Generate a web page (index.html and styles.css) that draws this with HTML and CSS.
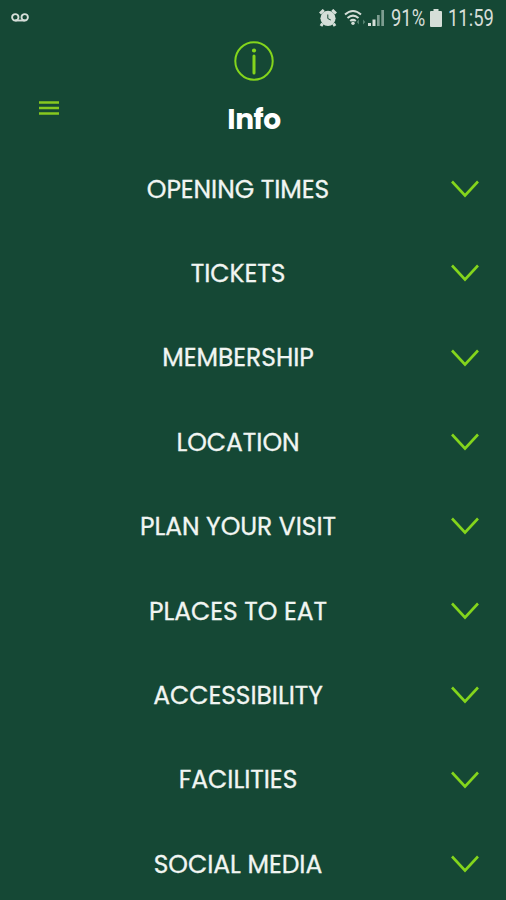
FILE: index.html
```html
<!DOCTYPE html>
<html lang="en">
<head>
<meta charset="utf-8">
<title>Info</title>
<link rel="stylesheet" href="styles.css">
</head>
<body>
<svg class="defs" width="0" height="0" aria-hidden="true">
  <symbol id="chevron" viewBox="0 0 30 20"><path d="M2 2.5 15 16.5 28 2.5" fill="none" stroke="currentColor" stroke-width="2.6"/></symbol>
</svg>
<div class="status">
  <svg class="voicemail" width="18" height="10" viewBox="0 0 18 10"><g fill="none" stroke="currentColor" stroke-width="1.9"><circle cx="4.3" cy="4.3" r="3.2"/><circle cx="13.7" cy="4.3" r="3.2"/><path d="M4.3 7.5h9.4"/></g></svg>
  <svg class="alarm" width="18" height="18" viewBox="0 0 18 18"><circle cx="9" cy="9.3" r="7.6" fill="currentColor"/><path d="M1 4.5 4.8 1M17 4.5 13.2 1M3.5 14.5 2 17M14.5 14.5 16 17" stroke="currentColor" stroke-width="3"/><path d="M8.8 5.5v4l3 1.5" fill="none" stroke="#154835" stroke-width="1"/></svg>
  <svg class="wifi" width="22" height="18" viewBox="0 0 22 18"><g fill="none" stroke="currentColor" stroke-width="2"><path d="M1 5.500Q9 -1.500 17 5.500"/><path d="M3.5 9Q9 4.200 14.500 9"/><path d="M6.200 12Q9 9.700 11.800 12"/></g><circle cx="9" cy="14.300" r="1.700" fill="currentColor"/><path d="M15 10.500v5l-2.400-2.600M19 15.500v-5l2.400 2.600" fill="#568371"/></svg>
  <svg class="signal" width="17" height="18" viewBox="0 0 17 18"><path d="M0 14h3v3H0zM4.500 10.500h3V17h-3z" fill="currentColor"/><path d="M9 6h2.700v11H9zM13.300 1H16v16h-2.700z" fill="#7d9d90"/></svg>
  <span class="percent"><span class="narrow">91%</span></span>
  <svg class="battery" width="12" height="18" viewBox="0 0 12 18"><path d="M3.500 0h5v2H11q1 0 1 1v14q0 1-1 1H1q-1 0-1-1V3q0-1 1-1h2.500z" fill="currentColor"/></svg>
  <span class="clock"><span class="narrow">11:59</span></span>
</div>
<header class="header">
  <button class="menu" aria-label="Menu"><svg width="20" height="15" viewBox="0 0 20 15"><path d="M0 2.500h20M0 8h20M0 13.500h20" stroke="currentColor" stroke-width="2.600"/></svg></button>
  <div class="title">
    <svg width="40" height="40" viewBox="0 0 40 40"><circle cx="20" cy="20" r="18.700" fill="none" stroke="currentColor" stroke-width="2"/><circle cx="20" cy="9.500" r="2.100" fill="currentColor"/><path d="M20 15v17" stroke="currentColor" stroke-width="3" stroke-linecap="round"/></svg>
    <h1>Info</h1>
  </div>
</header>
<main class="list">
  <div class="row"><span class="label">OPENING TIMES</span><svg class="chevron"><use href="#chevron"/></svg></div>
  <div class="row"><span class="label">TICKETS</span><svg class="chevron"><use href="#chevron"/></svg></div>
  <div class="row"><span class="label">MEMBERSHIP</span><svg class="chevron"><use href="#chevron"/></svg></div>
  <div class="row"><span class="label">LOCATION</span><svg class="chevron"><use href="#chevron"/></svg></div>
  <div class="row"><span class="label">PLAN YOUR VISIT</span><svg class="chevron"><use href="#chevron"/></svg></div>
  <div class="row"><span class="label">PLACES TO EAT</span><svg class="chevron"><use href="#chevron"/></svg></div>
  <div class="row"><span class="label">ACCESSIBILITY</span><svg class="chevron"><use href="#chevron"/></svg></div>
  <div class="row"><span class="label">FACILITIES</span><svg class="chevron"><use href="#chevron"/></svg></div>
  <div class="row"><span class="label">SOCIAL MEDIA</span><svg class="chevron"><use href="#chevron"/></svg></div>
</main>
</body>
</html>
```
FILE: styles.css
```css
* { box-sizing: border-box; }
body { margin: 0; height: 900px; overflow: hidden; background: #154835; color: #f1f5f2; font-family: Poppins, Inter, sans-serif; }
.defs { position: absolute; }
.status { display: flex; align-items: center; height: 36px; padding: 0 12px 0 11px; color: #d5ded8; font-family: Roboto, sans-serif; font-size: 23px; line-height: 38px; }
.alarm { margin-left: auto; margin-right: 7px; }
.wifi { margin-right: 2px; }
.signal { margin-right: 6px; }
.percent { width: 34px; margin-right: 5px; white-space: nowrap; }
.battery { margin-right: 6px; }
.clock { width: 46px; white-space: nowrap; }
.narrow { display: inline-block; padding-top: 1px; transform: scaleX(0.8); transform-origin: left center; }
.header { display: grid; grid-template-columns: 214px 80px 1fr; height: 111.6px; }
.menu { align-self: start; justify-self: start; display: block; margin: 64px 0 0 39px; padding: 0; border: 0; background: none; color: #87c81f; }
.menu svg { display: block; }
.title { display: flex; flex-direction: column; align-items: center; padding-top: 5px; color: #84d51c; }
.title svg { flex: none; }
h1 { margin: 21px 0 0; color: #fff; font-size: 28px; line-height: 36px; font-weight: 700; letter-spacing: -0.4px; }
.list { display: grid; grid-auto-rows: 84.4px; }
.row { display: grid; grid-template-columns: 476px 30px; height: 84.4px; }
.label { justify-self: center; font-size: 25px; line-height: 84px; font-weight: 400; letter-spacing: -0.05px; white-space: nowrap; -webkit-text-stroke: 0.3px currentColor; }
.row .chevron { width: 30px; height: 20px; margin: 31.3px 0 0 -26.5px; color: #84d51c; }
```
